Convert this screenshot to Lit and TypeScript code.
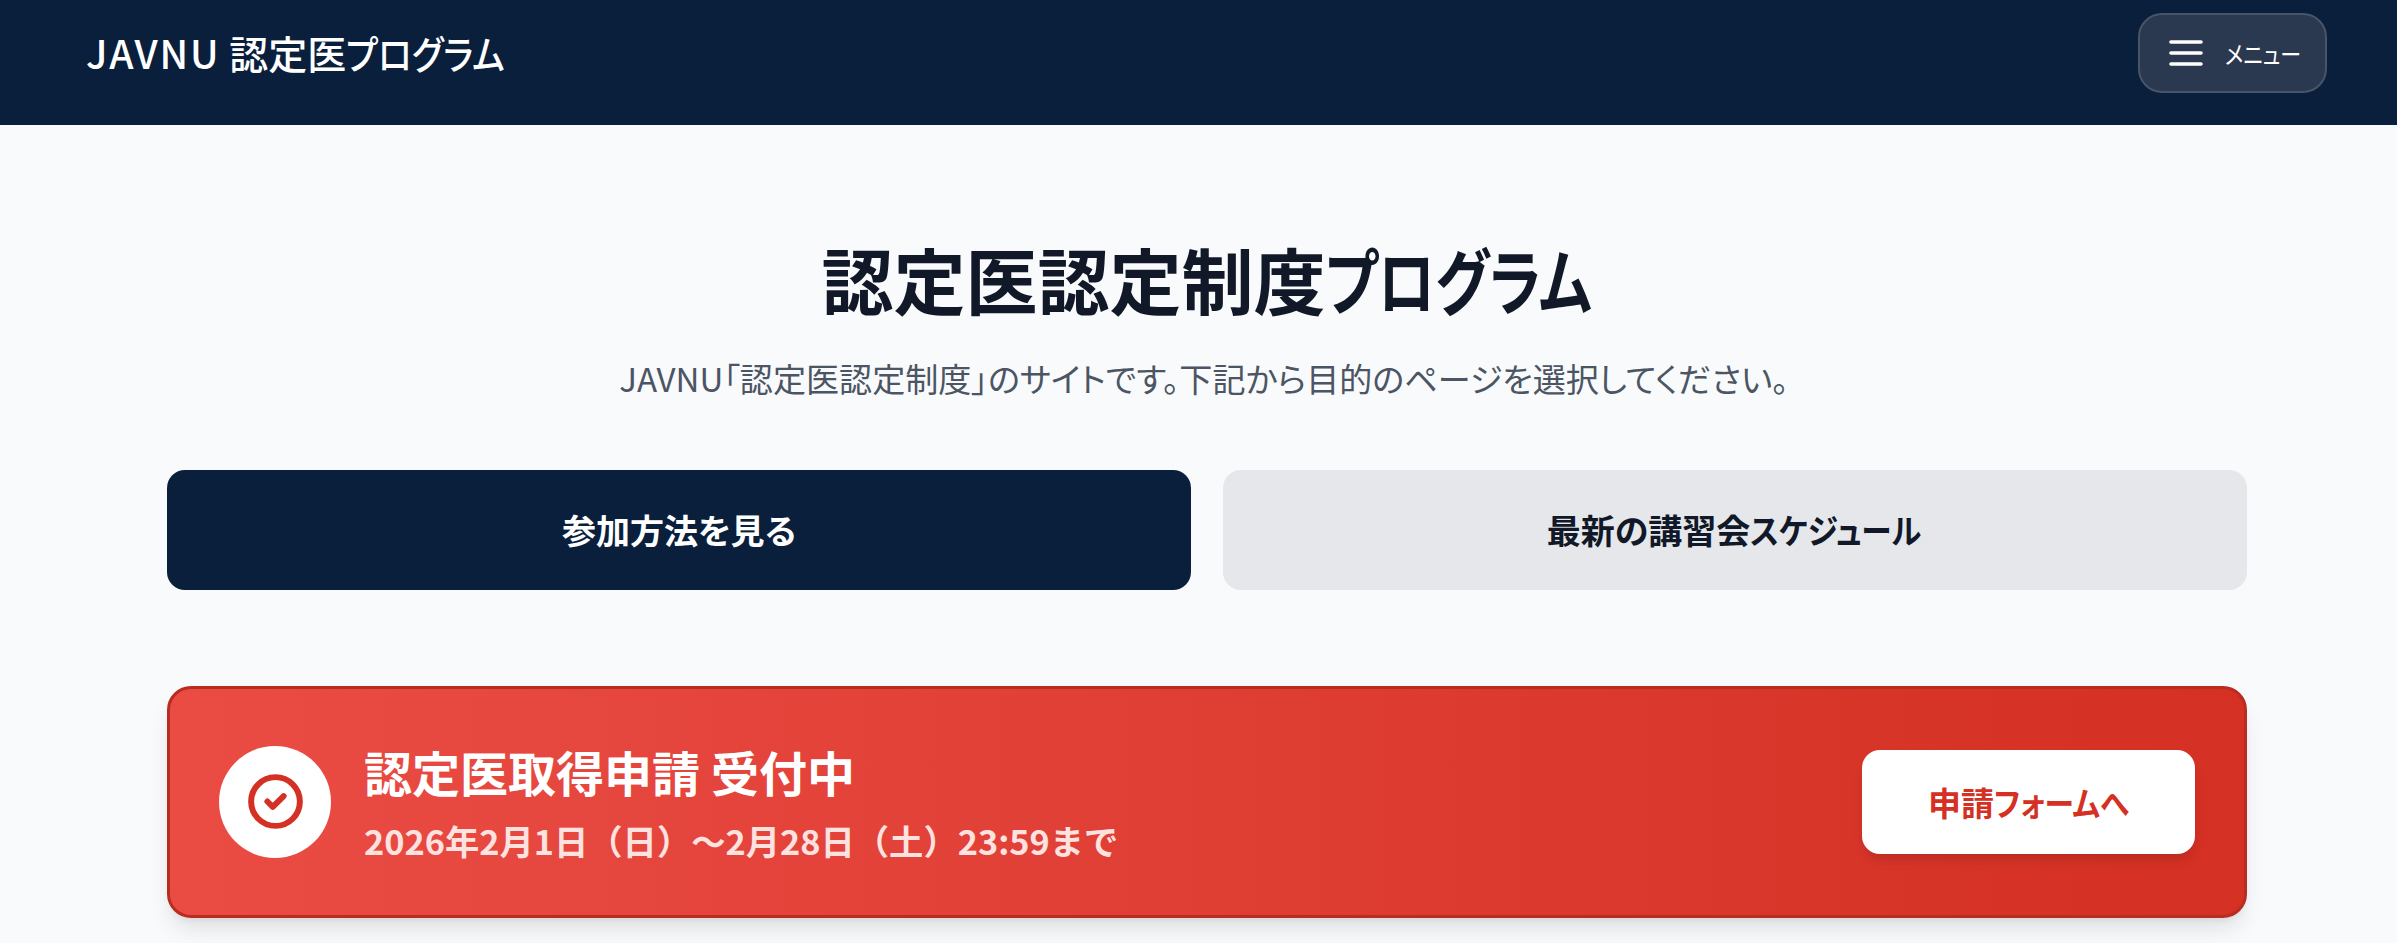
import { LitElement, html, css } from "lit";
import { customElement } from "lit/decorators.js";

@customElement("app-root")
export class AppRoot extends LitElement {
  static styles = css`
    :host {
      display: block;
      height: 943px;
      overflow: hidden;
      background: #f9fafb;
      font-family: "Noto Sans CJK JP", "Noto Sans", sans-serif;
      font-feature-settings: "palt";
      color: #111827;
    }
    .k {
      display: inline-block;
      transform-origin: 0 50%;
      white-space: nowrap;
    }
    .k-brand { transform: scaleX(0.89); margin-right: -0.51em; }
    .k-menu { transform: scaleX(0.84); margin-right: -0.56em; }
    .k-h1 { transform: scaleX(0.79); margin-right: -0.98em; }
    .k-action { transform: scaleX(0.9); margin-right: -0.51em; }
    .k-apply { transform: scaleX(0.9); margin-right: -0.45em; }
    .topbar {
      height: 125px;
      box-sizing: border-box;
      background: #0a1f3c;
      display: flex;
      align-items: center;
      justify-content: space-between;
      padding: 13px 70px 32px 86px;
    }
    .brand {
      color: #fff;
      font-size: 39px;
      font-weight: 500;
      line-height: 1;
      margin-top: -2px;
    }
    .brand-latin { letter-spacing: 1.8px; }
    .menu {
      width: 189px;
      height: 80px;
      box-sizing: border-box;
      border: 2px solid #475569;
      border-radius: 24px;
      background: #2a3850;
      color: #fff;
      display: flex;
      align-items: center;
      gap: 22px;
      padding: 0 0 0 29px;
      font-size: 25px;
    }
    .menu svg { display: block; width: 34px; height: 26px; }
    main {
      box-sizing: border-box;
      padding: 110px 150px 0 167px;
    }
    h1 {
      margin: 0;
      text-align: center;
      font-size: 72px;
      font-weight: 700;
      line-height: 1.2;
    }
    .lead {
      margin: 34px 0 0;
      padding-right: 6px;
      text-align: center;
      font-size: 33.1px;
      font-weight: 400;
      line-height: 1.4;
      color: #4b5563;
    }
    .actions {
      display: grid;
      grid-template-columns: 1fr 1fr;
      gap: 32px;
      margin-top: 68px;
    }
    .action {
      height: 120px;
      border-radius: 18px;
      display: flex;
      align-items: center;
      justify-content: center;
      font-size: 34px;
      font-weight: 700;
    }
    .action.primary { background: #0a1f3c; color: #fff; }
    .action.secondary { background: #e5e7eb; color: #111827; }
    .banner {
      margin-top: 96px;
      height: 232px;
      box-sizing: border-box;
      border: 3px solid #b82c22;
      border-radius: 24px;
      background: linear-gradient(90deg, #ea4c44, #d43023);
      box-shadow: 0 15px 22px -4px rgba(0, 0, 0, 0.1), 0 6px 9px -6px rgba(0, 0, 0, 0.1);
      display: flex;
      align-items: center;
      padding: 0 49px 0 49px;
    }
    .badge {
      width: 112px;
      height: 112px;
      flex: none;
      border-radius: 50%;
      background: #fff;
      display: flex;
      align-items: center;
      justify-content: center;
    }
    .badge svg { width: 65px; height: 65px; display: block; }
    .info { flex: 1; margin-left: 33px; }
    .info-title {
      color: #fff;
      font-size: 48px;
      font-weight: 700;
      line-height: 1.3;
    }
    .info-date {
      color: #fee2e0;
      font-size: 34.3px;
      font-weight: 700;
      font-feature-settings: normal;
      line-height: 1.4;
      margin-top: 14px;
    }
    .apply {
      width: 333px;
      height: 104px;
      flex: none;
      border-radius: 18px;
      background: #fff;
      color: #d43023;
      display: flex;
      align-items: center;
      justify-content: center;
      font-size: 33px;
      font-weight: 700;
      box-shadow: 0 8px 12px -3px rgba(0, 0, 0, 0.15);
    }
  `;

  render() {
    return html`
      <header class="topbar">
        <div class="brand"><span class="brand-latin">JAVNU</span> 認定医<span class="k k-brand">プログラム</span></div>
        <div class="menu">
          <svg viewBox="0 0 34 26" fill="none" stroke="#fff" stroke-width="3.6" stroke-linecap="round">
            <path d="M2 2h30M2 13h30M2 24h30" />
          </svg>
          <span class="k k-menu">メニュー</span>
        </div>
      </header>
      <main>
        <h1>認定医認定制度<span class="k k-h1">プログラム</span></h1>
        <p class="lead">JAVNU「認定医認定制度」のサイトです。下記から目的のページを選択してください。</p>
        <div class="actions">
          <div class="action primary"><span>参加方法を見る</span></div>
          <div class="action secondary"><span>最新の講習会<span class="k k-action">スケジュール</span></span></div>
        </div>
        <section class="banner">
          <div class="badge">
            <svg viewBox="0 0 24 24" fill="none" stroke="#d43023" stroke-width="2.2" stroke-linecap="round" stroke-linejoin="round">
              <path d="M9 12l2 2 4-4m6 2a9 9 0 11-18 0 9 9 0 0118 0z" />
            </svg>
          </div>
          <div class="info">
            <div class="info-title">認定医取得申請 受付中</div>
            <div class="info-date">2026年2月1日（日）〜2月28日（土）23:59まで</div>
          </div>
          <div class="apply"><span>申請<span class="k k-apply">フォームへ</span></span></div>
        </section>
      </main>
    `;
  }
}
